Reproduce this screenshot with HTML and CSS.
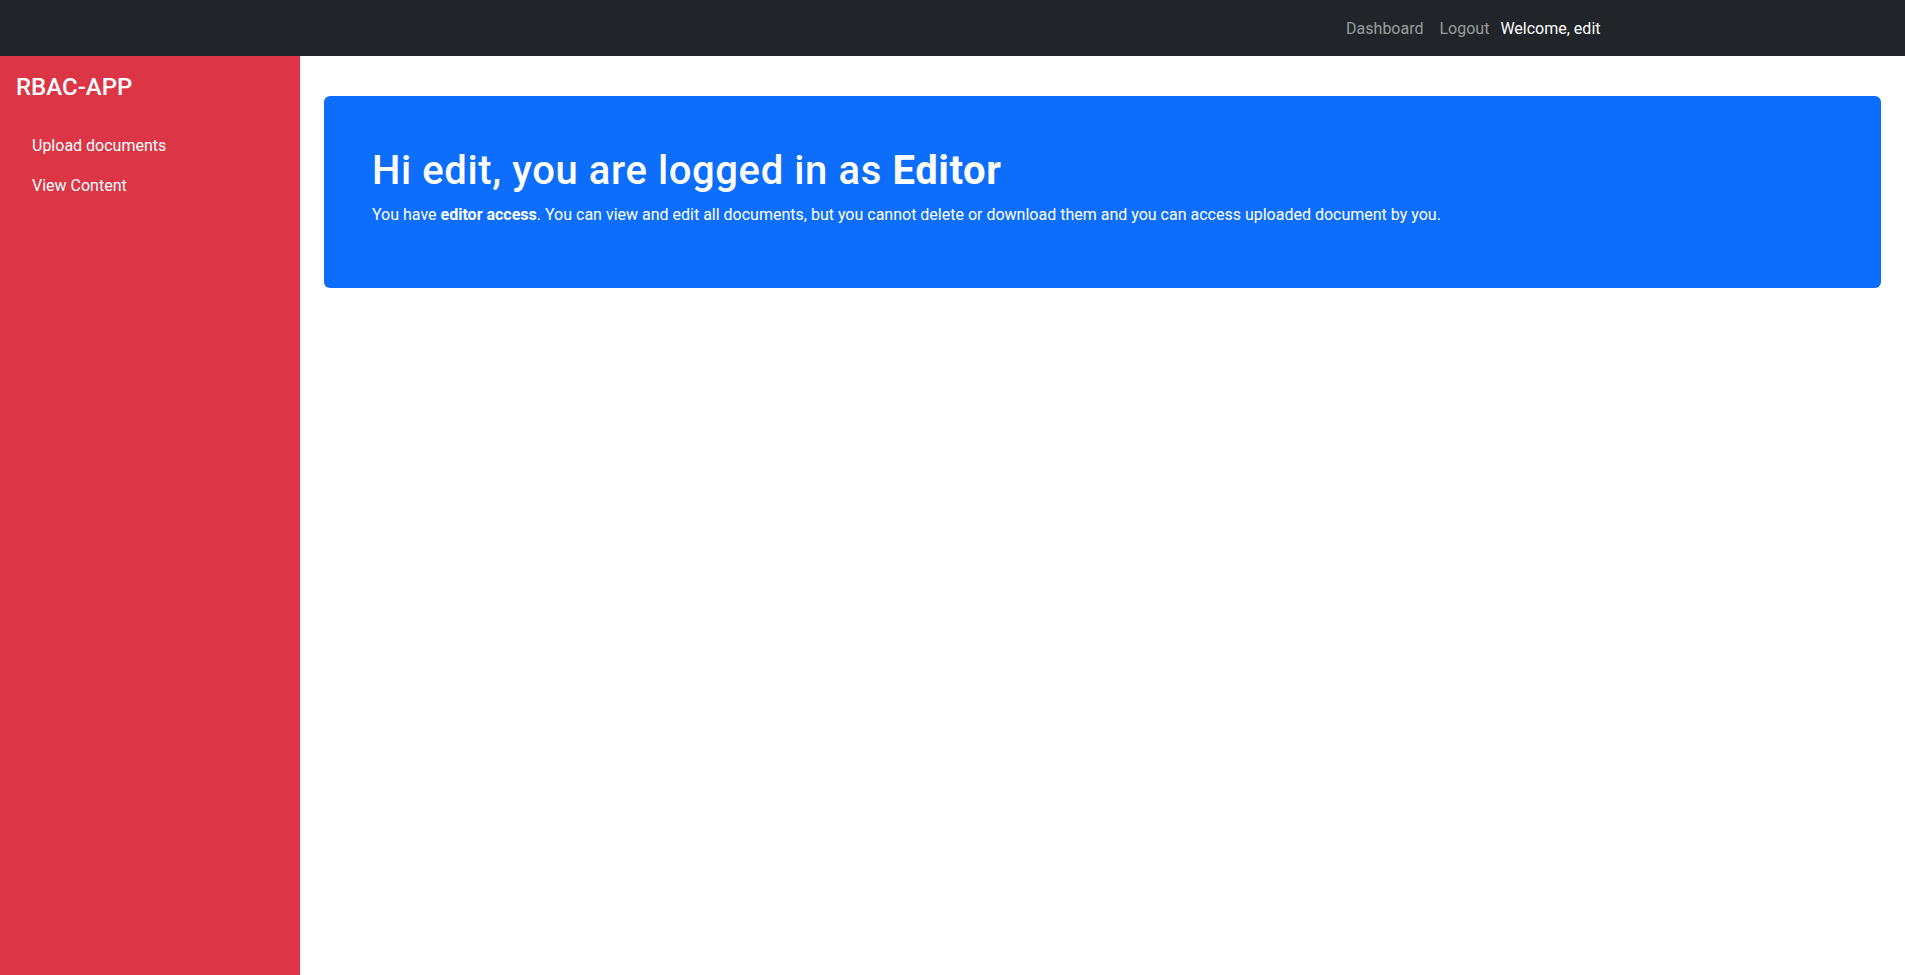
FILE: index.html
```html
<!DOCTYPE html>
<html lang="en">
<head>
<meta charset="utf-8">
<title>RBAC-APP</title>
<link rel="stylesheet" href="styles.css">
</head>
<body>
<nav class="navbar">
  <div class="container">
    <ul class="nav-list">
      <li><a class="nav-link" href="#">Dashboard</a></li>
      <li><a class="nav-link" href="#">Logout</a></li>
      <li><span class="welcome">Welcome, edit</span></li>
    </ul>
  </div>
</nav>
<div class="layout">
  <aside class="sidebar">
    <h4 class="brand">RBAC-APP</h4>
    <ul class="side-nav">
      <li><a class="side-link" href="#">Upload documents</a></li>
      <li><a class="side-link" href="#">View Content</a></li>
    </ul>
  </aside>
  <main class="main">
    <div class="hero">
      <h1 class="hero-title">Hi edit, you are logged in as <strong>Editor</strong></h1>
      <p class="hero-text">You have <strong>editor access</strong>. You can view and edit all documents, but you cannot delete or download them and you can access uploaded document by you.</p>
    </div>
  </main>
</div>
</body>
</html>
```
FILE: styles.css
```css
* { box-sizing: border-box; }
html, body { margin: 0; padding: 0; }
body {
  font-family: "Segoe UI", Roboto, "Liberation Sans", sans-serif;
  font-size: 16px;
  line-height: 1.5;
  color: #212529;
  background: #fff;
  height: 975px;
  display: flex;
  flex-direction: column;
  overflow: hidden;
}
a { text-decoration: none; }
.navbar {
  background: #212529;
  height: 56px;
  padding-top: 2px;
  display: flex;
  align-items: center;
  flex-shrink: 0;
}
.container {
  width: 1320px;
  margin: 0 auto;
  padding: 0 12px;
  display: flex;
  justify-content: flex-end;
}
.nav-list {
  list-style: none;
  margin: 0;
  padding: 0;
  display: flex;
  align-items: center;
}
.nav-link {
  display: block;
  padding: 8px;
  color: rgba(255,255,255,0.55);
}
.welcome {
  display: block;
  padding-left: 3px;
  color: #fff;
}
.layout {
  flex: 1;
  display: flex;
}
.sidebar {
  width: 300px;
  flex-shrink: 0;
  background: #dc3545;
  padding: 17px 16px 16px;
  color: #fff;
}
.brand {
  margin: 0 0 24px;
  font-size: 24px;
  font-weight: 500;
  line-height: 1.2;
}
.side-nav {
  list-style: none;
  margin: 0;
  padding: 0;
}
.side-link {
  display: block;
  padding: 8px 16px;
  color: #fff;
}
.main {
  flex: 1;
  padding: 40px 24px 24px;
}
.hero {
  background: #0d6efd;
  color: #fff;
  border-radius: 6px;
  padding: 51px 48px 45px;
}
.hero-title {
  margin: 0 0 8px;
  font-size: 40px;
  font-weight: 500;
  line-height: 1.2;
  letter-spacing: 0.6px;
}
.hero-title strong { font-weight: 700; }
.hero-text {
  margin: 0 0 16px;
}
.hero-text strong { font-weight: 700; }
```
